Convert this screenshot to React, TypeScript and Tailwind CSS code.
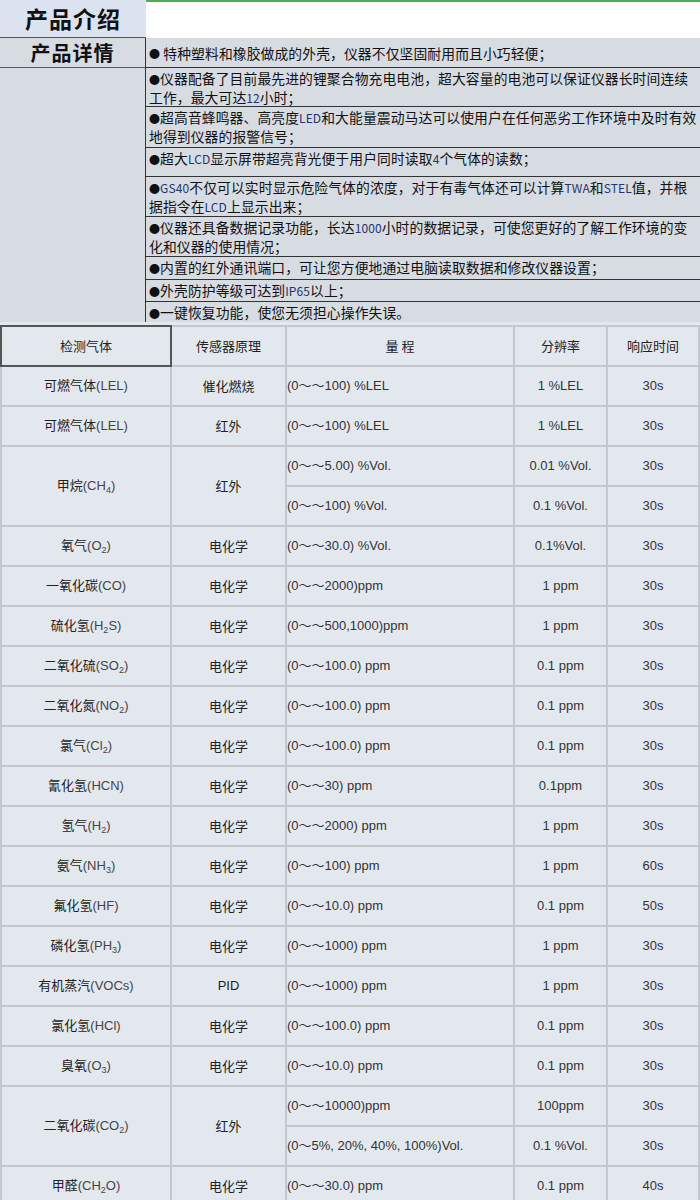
const F = { fontFamily: '"Noto Sans CJK SC", "Liberation Sans", sans-serif' };
const T = { fontFamily: '"Liberation Sans", "Noto Sans CJK SC", sans-serif' };

const L = ({ children }: { children: React.ReactNode }) => (
  <span className="text-[12px] text-[#1e3570]">{children}</span>
);

const B = () => <span className="text-[11px]">●</span>;

const details: { h: string; c: React.ReactNode }[] = [
  { h: "h-[39px]", c: <><B />仪器配备了目前最先进的锂聚合物充电电池，超大容量的电池可以保证仪器长时间连续工作，最大可达<L>12</L>小时；</> },
  { h: "h-[41px]", c: <><B />超高音蜂鸣器、高亮度<L>LED</L>和大能量震动马达可以使用户在任何恶劣工作环境中及时有效地得到仪器的报警信号；</> },
  { h: "h-[29px]", c: <><B />超大<L>LCD</L>显示屏带超亮背光便于用户同时读取<L>4</L>个气体的读数；</> },
  { h: "h-[40px]", c: <><B /><L>GS40</L>不仅可以实时显示危险气体的浓度，对于有毒气体还可以计算<L>TWA</L>和<L>STEL</L>值，并根据指令在<L>LCD</L>上显示出来；</> },
  { h: "h-[40px]", c: <><B />仪器还具备数据记录功能，长达<L>1000</L>小时的数据记录，可使您更好的了解工作环境的变化和仪器的使用情况；</> },
  { h: "h-[23px]", c: <><B />内置的红外通讯端口，可让您方便地通过电脑读取数据和修改仪器设置；</> },
  { h: "h-[22px]", c: <><B />外壳防护等级可达到<L>IP65</L>以上；</> },
  { h: "h-[20px]", c: <><B />一键恢复功能，使您无须担心操作失误。</> },
];

const G = ({ zh, a, sub, b }: { zh: string; a: string; sub?: string; b?: string }) => (
  <>
    {zh}
    <span className="text-[#444]">
      {a}
      {sub && <sub className="text-[9px]">{sub}</sub>}
      {b}
    </span>
  </>
);

type Row = { gas: React.ReactNode; p: string; r: [string, string, string][] };
const rows: Row[] = [
  { gas: <G zh="可燃气体" a="(LEL)" />, p: "催化燃烧", r: [["(0～～100) %LEL", "1 %LEL", "30s"]] },
  { gas: <G zh="可燃气体" a="(LEL)" />, p: "红外", r: [["(0～～100) %LEL", "1 %LEL", "30s"]] },
  { gas: <G zh="甲烷" a="(CH" sub="4" b=")" />, p: "红外", r: [["(0～～5.00) %Vol.", "0.01 %Vol.", "30s"], ["(0～～100) %Vol.", "0.1 %Vol.", "30s"]] },
  { gas: <G zh="氧气" a="(O" sub="2" b=")" />, p: "电化学", r: [["(0～～30.0) %Vol.", "0.1%Vol.", "30s"]] },
  { gas: <G zh="一氧化碳" a="(CO)" />, p: "电化学", r: [["(0～～2000)ppm", "1 ppm", "30s"]] },
  { gas: <G zh="硫化氢" a="(H" sub="2" b="S)" />, p: "电化学", r: [["(0～～500,1000)ppm", "1 ppm", "30s"]] },
  { gas: <G zh="二氧化硫" a="(SO" sub="2" b=")" />, p: "电化学", r: [["(0～～100.0) ppm", "0.1 ppm", "30s"]] },
  { gas: <G zh="二氧化氮" a="(NO" sub="2" b=")" />, p: "电化学", r: [["(0～～100.0) ppm", "0.1 ppm", "30s"]] },
  { gas: <G zh="氯气" a="(Cl" sub="2" b=")" />, p: "电化学", r: [["(0～～100.0) ppm", "0.1 ppm", "30s"]] },
  { gas: <G zh="氰化氢" a="(HCN)" />, p: "电化学", r: [["(0～～30) ppm", "0.1ppm", "30s"]] },
  { gas: <G zh="氢气" a="(H" sub="2" b=")" />, p: "电化学", r: [["(0～～2000) ppm", "1 ppm", "30s"]] },
  { gas: <G zh="氨气" a="(NH" sub="3" b=")" />, p: "电化学", r: [["(0～～100) ppm", "1 ppm", "60s"]] },
  { gas: <G zh="氟化氢" a="(HF)" />, p: "电化学", r: [["(0～～10.0) ppm", "0.1 ppm", "50s"]] },
  { gas: <G zh="磷化氢" a="(PH" sub="3" b=")" />, p: "电化学", r: [["(0～～1000) ppm", "1 ppm", "30s"]] },
  { gas: <G zh="有机蒸汽" a="(VOCs)" />, p: "PID", r: [["(0～～1000) ppm", "1 ppm", "30s"]] },
  { gas: <G zh="氯化氢" a="(HCl)" />, p: "电化学", r: [["(0～～100.0) ppm", "0.1 ppm", "30s"]] },
  { gas: <G zh="臭氧" a="(O" sub="3" b=")" />, p: "电化学", r: [["(0～～10.0) ppm", "0.1 ppm", "30s"]] },
  { gas: <G zh="二氧化碳" a="(CO" sub="2" b=")" />, p: "红外", r: [["(0～～10000)ppm", "100ppm", "30s"], ["(0～5%, 20%, 40%, 100%)Vol.", "0.1 %Vol.", "30s"]] },
  { gas: <G zh="甲醛" a="(CH" sub="2" b="O)" />, p: "电化学", r: [["(0～～30.0) ppm", "0.1 ppm", "40s"]] },
];

const cell = "border-2 border-[#c4c8cd] h-[40px] text-[13px] text-[#222]";

export default function App() {
  return (
    <div className="w-[700px] bg-white" style={F}>
      {/* header */}
      <div className="flex h-[38px]">
        <div className="w-[146px] bg-[#dbe3f1] flex items-center justify-center text-[23px] font-bold text-[#111] border-b border-[#555] tracking-[1px]">
          产品介绍
        </div>
        <div className="flex-1 border-t-2 border-[#4caf50]" />
      </div>

      {/* details */}
      <div className="flex bg-[#d7dbe2] text-[13.8px] leading-[18px] text-[#111] tracking-[0.1px]">
        <div className="w-[146px] shrink-0 border-r border-[#333]">
          <div className="h-[30px] flex items-center justify-center text-[20px] font-bold border-b border-[#555] tracking-[1px]">产品详情</div>
        </div>
        <div className="flex-1">
          <div className="h-[30px] flex items-center px-[3px] border-b border-[#333]"><B />&nbsp;特种塑料和橡胶做成的外壳，仪器不仅坚固耐用而且小巧轻便；</div>
          {details.map((d, i) => (
            <div key={i} className={`${d.h} px-[3px] pt-[1px] overflow-hidden ${i < details.length - 1 ? "border-b border-[#333]" : ""}`}>
              {d.c}
            </div>
          ))}
        </div>
      </div>

      {/* table */}
      <div className="bg-[#e3e8ef] pt-[3px]">
        <table className="border-collapse w-[698px] table-fixed" style={T}>
          <colgroup>
            <col className="w-[170px]" />
            <col className="w-[115px]" />
            <col className="w-[228px]" />
            <col className="w-[93px]" />
            <col className="w-[92px]" />
          </colgroup>
          <thead>
            <tr>
              <th className="border-2 border-[#555] h-[40px] text-[13px] text-[#222] font-normal" style={F}>检测气体</th>
              <th className={`${cell} font-normal`} style={F}>传感器原理</th>
              <th className={`${cell} font-normal`} style={F}>量 程</th>
              <th className={`${cell} font-normal`} style={F}>分辨率</th>
              <th className={`${cell} font-normal`} style={F}>响应时间</th>
            </tr>
          </thead>
          <tbody>
            {rows.map((row, i) =>
              row.r.map((r, j) => (
                <tr key={`${i}-${j}`}>
                  {j === 0 && (
                    <>
                      <td rowSpan={row.r.length} className={`${cell} text-center`}>{row.gas}</td>
                      <td rowSpan={row.r.length} className={`${cell} text-center`} style={row.p === "PID" ? T : F}>{row.p}</td>
                    </>
                  )}
                  <td className={`${cell} text-left pl-0 text-[#333]`}>{r[0]}</td>
                  <td className={`${cell} text-center text-[#333]`}>{r[1]}</td>
                  <td className={`${cell} text-center text-[#333]`}>{r[2]}</td>
                </tr>
              ))
            )}
          </tbody>
        </table>
      </div>
    </div>
  );
}
